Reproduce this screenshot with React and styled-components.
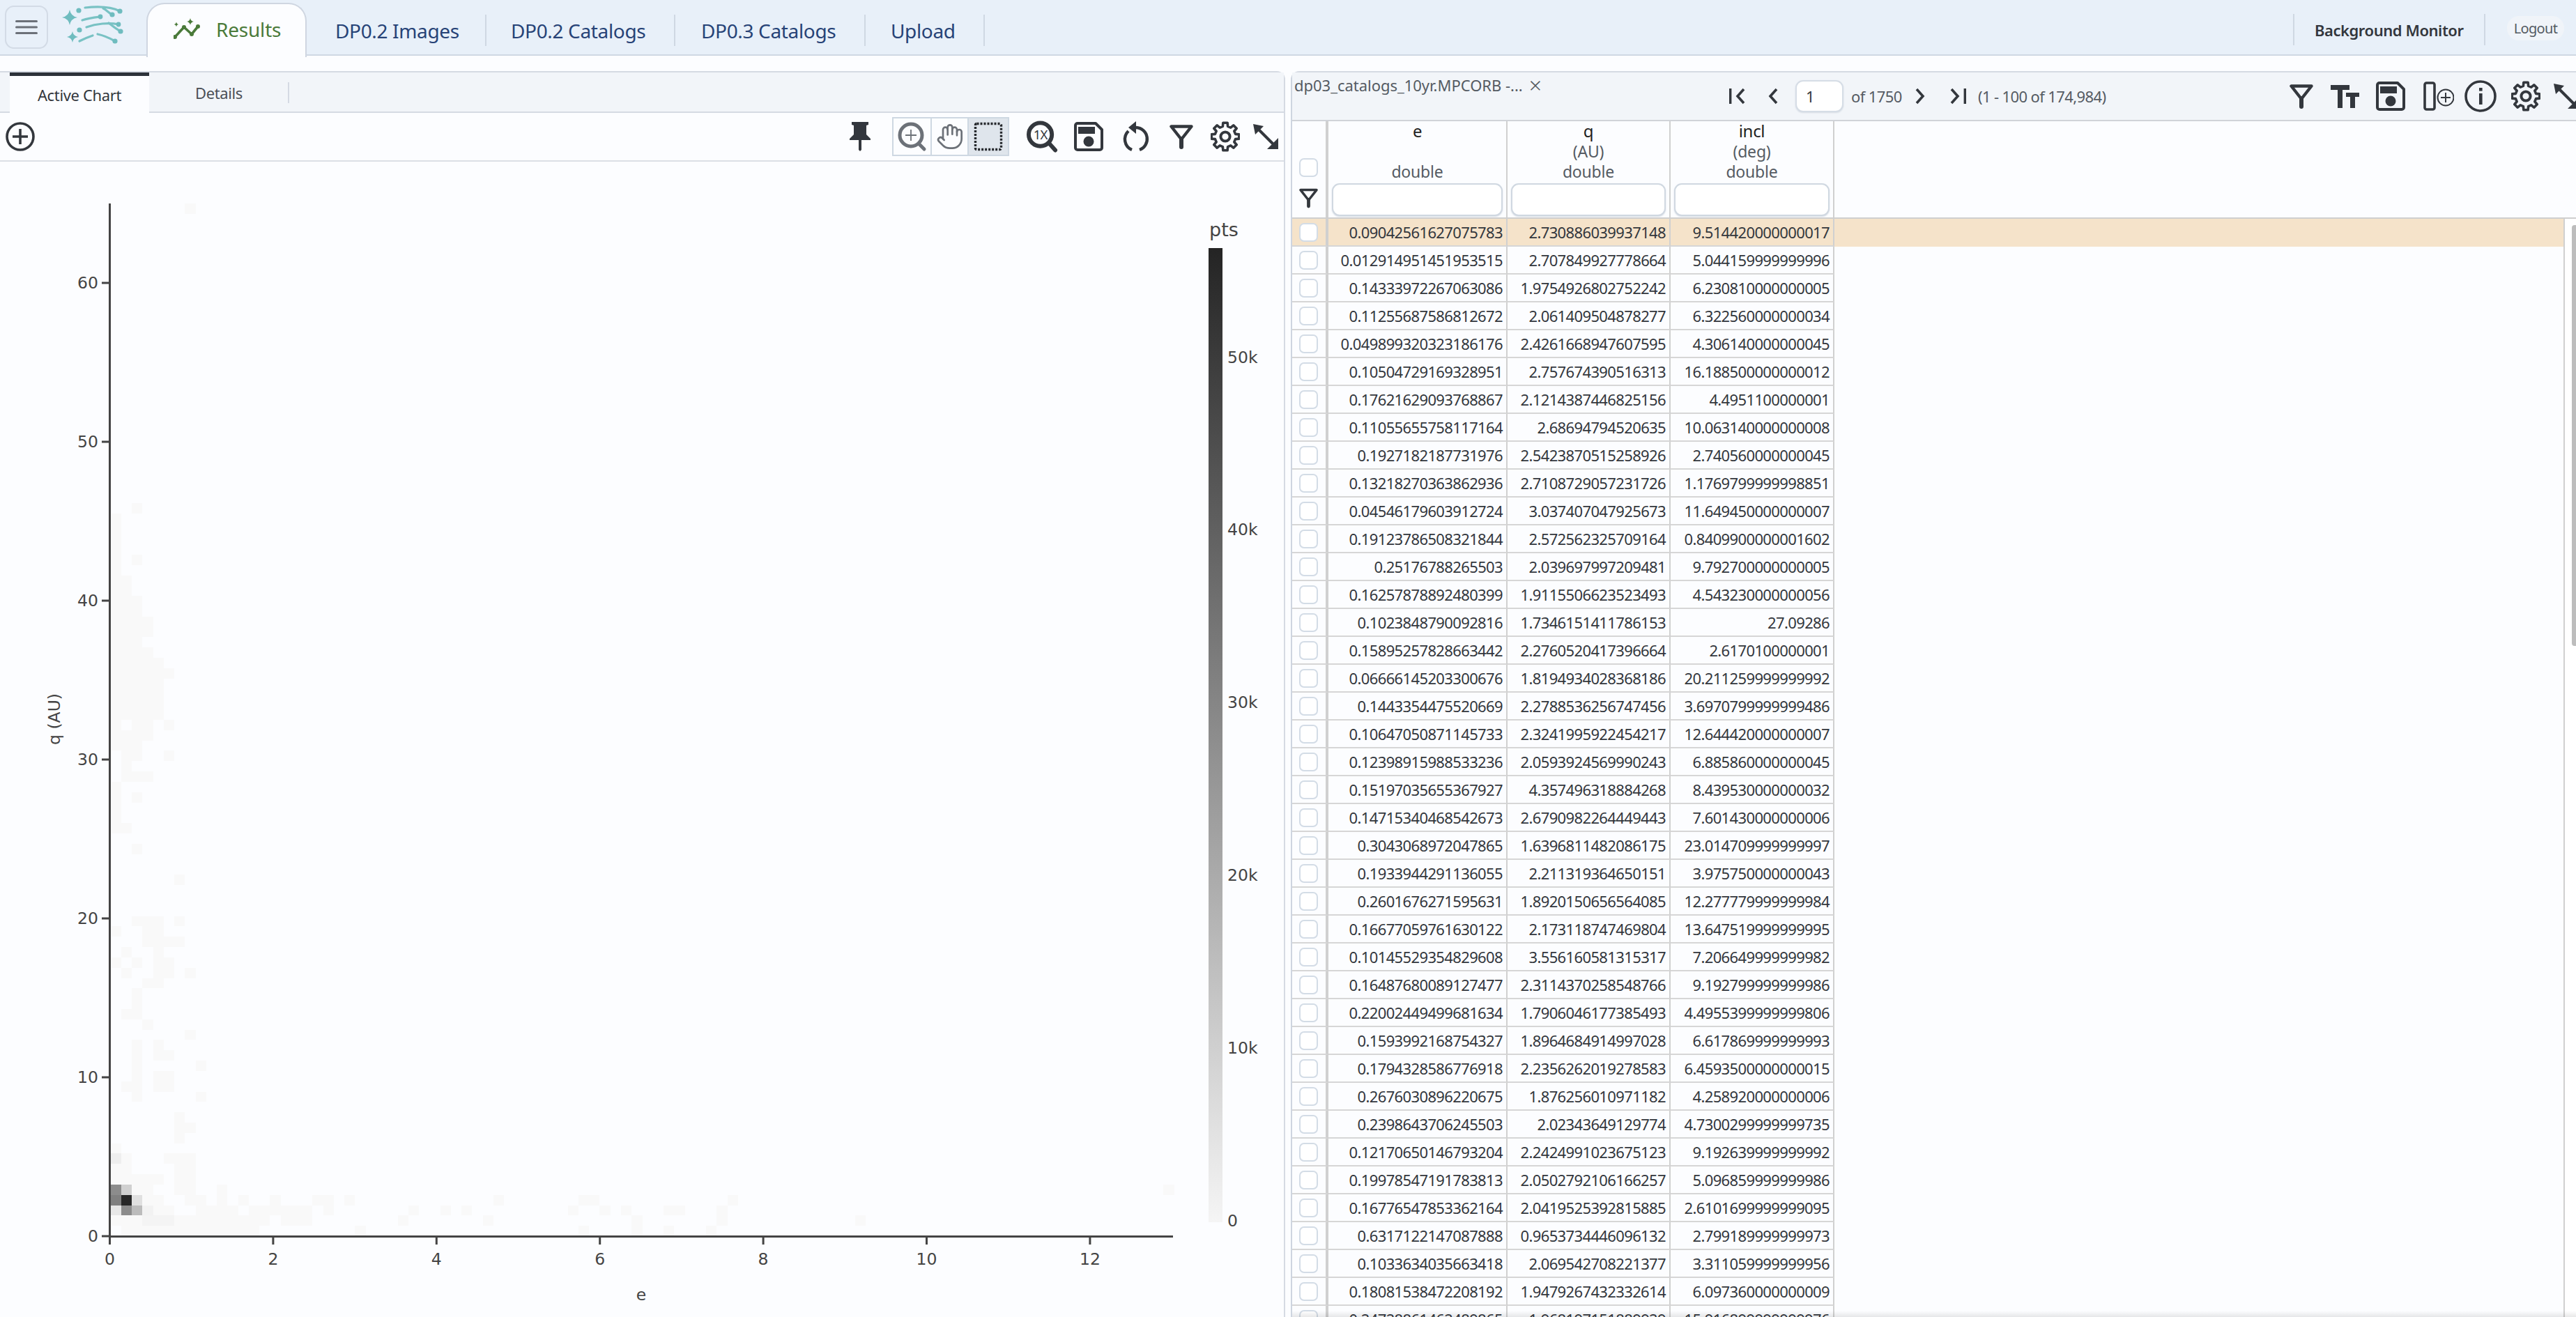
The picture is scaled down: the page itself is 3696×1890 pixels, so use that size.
import React from 'react';
import styled, { createGlobalStyle } from 'styled-components';
import { Hand } from 'lucide-react';

const Global = createGlobalStyle`
  html, body { margin: 0; padding: 0; background: #fcfdff; }
  body { font-family: "Noto Sans", "Open Sans", sans-serif; }
  #root { width: 3696px; height: 1890px; overflow: hidden; }
  * { box-sizing: border-box; }
`;

const INK = '#33373d';
const GREY = '#6c7178';

const Page = styled.div`
  width: 3696px; height: 1890px; display: flex; flex-direction: column;
  background: #fcfdff; overflow: hidden;
`;
const NavBar = styled.header`
  flex: none; height: 80px; display: flex; align-items: flex-start;
  background: #e8f0f9; border-bottom: 2px solid #cfd8e3;
`;
const MenuButton = styled.div`
  width: 62px; height: 62px; margin: 8px 0 0 7px; flex: none; display: flex; align-items: center;
  justify-content: center; border: 2px solid #d3dbe6; border-radius: 13px;
`;
const LogoBox = styled.div`flex: none; margin: 4px 0 0 19px; width: 92px; height: 66px;`;
const ResultsTab = styled.div`
  flex: none; width: 230px; height: 78px; margin: 4px 0 0 30px; padding: 0 0 4px 37px;
  display: flex; align-items: center; gap: 21px; background: #fcfdff;
  border: 2px solid #cfd6e1; border-bottom: none; border-radius: 26px 26px 0 0;
  color: #4a7a3a; font-size: 28px; letter-spacing: -0.2px;
`;
const NavItem = styled.div`
  flex: none; width: ${p => p.$w}px; height: 45px; margin-top: 21px; padding-left: ${p => p.$pl}px;
  display: flex; align-items: center; border-right: 2px solid #cfd8e3; white-space: nowrap;
  color: #274377; font-size: 28px; letter-spacing: -0.35px;
`;
const MonitorItem = styled.div`
  flex: none; margin-left: auto; width: 276px; height: 45px; margin-top: 20px; padding-left: 29px;
  display: flex; align-items: center; white-space: nowrap;
  border-left: 2px solid #cfd8e3; border-right: 2px solid #cfd8e3;
  color: ${INK}; font-size: 22px; font-weight: 600; letter-spacing: -0.45px;
`;
const LogoutPill = styled.div`
  flex: none; width: 82px; height: 35px; margin: 23px 17px 0 31px; display: flex; align-items: center;
  justify-content: center; border-radius: 17px; background: #f0f4f9; color: #555b63;
  font-size: 20px; letter-spacing: -0.7px;
`;
const Main = styled.main`flex: 1; min-height: 0; display: flex; gap: 8px; padding-top: 22px;`;
const LeftPanel = styled.section`
  flex: none; width: 1844px; display: flex; flex-direction: column;
  border: 2px solid #d5dae3; border-left: none; border-bottom: none; border-radius: 0 12px 0 0;
`;
const ChartTabs = styled.div`
  flex: none; height: 58px; display: flex; background: #f2f5f9; border-bottom: 2px solid #d5dae3;
`;
const ActiveTab = styled.div`
  flex: none; width: 200px; height: 58px; margin-left: 14px; padding-top: 1px; display: flex; align-items: center;
  justify-content: center; background: #fcfdff; border-top: 5px solid #2c323a;
  color: ${INK}; font-size: 22px; letter-spacing: -0.35px;
`;
const PlainTab = styled.div`
  flex: none; width: 201px; height: 30px; margin-top: 14px; padding-left: 66px; display: flex; align-items: center;
  border-right: 2px solid #d5dae3; color: #4a4f56; font-size: 22px; letter-spacing: -0.4px;
`;
const ChartTools = styled.div`
  flex: none; height: 70px; display: flex; align-items: center; padding: 0 8px;
  border-bottom: 2px solid #dcdfe5;
`;
const Spacer = styled.div`flex: 1;`;
const Slot = styled.div`
  flex: none; width: ${p => p.$w}px; margin-left: ${p => p.$ml || 0}px; display: flex;
  align-items: center; justify-content: center;
  svg { display: block; }
`;
const ZoomGroup = styled.div`
  flex: none; width: 168px; height: 56px; margin-left: 31px; display: flex;
  border: 2px solid #ced8e2; background: #fcfdff;
`;
const ZoomCell = styled.div`
  flex: none; width: ${p => p.$w}px; display: flex; align-items: center; justify-content: center;
  border-left: ${p => p.$divided ? '2px solid #ced8e2' : 'none'};
  background: ${p => p.$active ? '#dfe5ec' : 'transparent'};
`;
const ChartArea = styled.div`flex: 1; min-height: 0; svg { display: block; }`;

const RightPanel = styled.section`
  flex: 1; min-width: 0; display: flex; flex-direction: column;
  border-top: 2px solid #d5dae3; border-left: 2px solid #ced5e0; border-radius: 12px 0 0 0;
`;
const TableBar = styled.div`
  flex: none; height: 70px; display: flex; align-items: center; background: #f2f5f9;
  border-bottom: 2px solid #d0d3d8; padding-left: 3px;
`;
const TableTitle = styled.div`
  flex: none; width: 356px; height: 36px; margin-top: -32px; display: flex; align-items: center; gap: 9px;
  white-space: nowrap; color: #555b63; font-size: 22px; letter-spacing: -0.02px;
`;
const Close = styled.span`font-size: 32px; font-weight: 300; letter-spacing: 0; color: #555b63; line-height: 1;`;
const PageInput = styled.div`
  flex: none; width: 69px; height: 46px; margin-left: 25px; padding-left: 13px; display: flex; align-items: center;
  background: #fff; border: 2px solid #d6dde6; border-radius: 11px; box-shadow: 0 1px 2px #d5dbe3;
  color: ${INK}; font-size: 22px;
`;
const BarText = styled.div`
  flex: none; width: ${p => p.$w}px; margin-left: ${p => p.$ml}px; white-space: nowrap;
  color: #555b63; font-size: 22px; letter-spacing: -0.62px;
`;
const HeaderRow = styled.div`
  flex: none; height: 140px; display: flex; border-bottom: 2px solid #cfcfcf;
`;
const SelectHead = styled.div`
  flex: none; width: 52px; padding: 53px 0 0 10px; display: flex; flex-direction: column; gap: 13px;
  border-right: 4px solid #d0d0d0;
`;
const HeadCell = styled.div`
  flex: none; width: ${p => p.$w}px; display: flex; flex-direction: column; align-items: center;
  border-right: 2px solid #d0d0d0;
`;
const HeadName = styled.div`height: 29px; line-height: 28px; color: #222; font-size: 24px; letter-spacing: -0.3px;`;
const HeadSub = styled.div`height: 29px; line-height: 29px; color: #555b63; font-size: 23px; letter-spacing: -0.2px;`;
const FilterInput = styled.div`
  width: calc(100% - 10px); height: 47px; margin-top: 2px; background: #fff;
  border: 2px solid #d0d8e1; border-radius: 11px; box-shadow: 0 1px 2px #d5dbe3;
`;
const BodyWrap = styled.div`flex: 1; min-height: 0; display: flex; position: relative;`;
const Rows = styled.div`flex: 1; min-width: 0; overflow: hidden; border-right: 2px solid #d0d0d0;`;
const Row = styled.div`
  height: 40px; display: flex; background: ${p => p.$hl ? '#f5e3ca' : 'transparent'};
`;
const CheckCell = styled.div`
  flex: none; width: 52px; padding-left: 10px; display: flex; align-items: center;
  border-right: 4px solid #d0d0d0; border-bottom: 2px solid #d6d6d6;
`;
const Check = styled.div`
  flex: none; width: 27px; height: 27px; background: #fff; border: 2px solid #d3dce6; border-radius: 7px;
`;
const NumCell = styled.div`
  flex: none; width: ${p => p.$w}px; padding-right: 5px; display: flex; align-items: center; justify-content: flex-end;
  white-space: nowrap; border-right: 2px solid #d0d0d0; border-bottom: 2px solid #d6d6d6;
  color: ${INK}; font-size: 22px; letter-spacing: -0.63px;
`;
const ScrollTrack = styled.div`flex: none; width: 16px; background: #fff; padding: 9px 0 0 10px;`;
const ScrollThumb = styled.div`width: 8px; height: 604px; background: #bdbdbd; border-radius: 4px 0 0 4px;`;
const BottomFade = styled.div`
  position: absolute; left: 0; right: 0; bottom: 0; height: 9px;
  background: linear-gradient(rgba(0,0,0,0), rgba(0,0,0,0.09));
`;

/* ---------- icons ---------- */
const gearPath = (cx, cy, ro, ri, teeth) => {
  const pts = [];
  const step = (Math.PI * 2) / teeth;
  for (let i = 0; i < teeth; i++) {
    const a = i * step - Math.PI / 2;
    const t = step * 0.2;
    const b = step * 0.31;
    [[ri, a - b], [ro, a - t], [ro, a + t], [ri, a + b]].forEach(([r, an]) => {
      pts.push(`${(cx + r * Math.cos(an)).toFixed(2)} ${(cy + r * Math.sin(an)).toFixed(2)}`);
    });
  }
  return `M${pts.join('L')}Z`;
};
const Gear = () => (
  <svg width="42" height="44" viewBox="0 0 42 44">
    <path d={gearPath(21, 22, 20, 15, 8)} fill="none" stroke={INK} strokeWidth="3.6" strokeLinejoin="round" />
    <circle cx="21" cy="22" r="6.6" fill="none" stroke={INK} strokeWidth="4" />
  </svg>
);
const Expand = () => (
  <svg width="36" height="36" viewBox="0 0 36 36">
    <line x1="6" y1="6" x2="30" y2="30" stroke={INK} strokeWidth="4" />
    <path d="M0 0L15 3L3 15Z M36 36V20L20 36Z" fill={INK} />
  </svg>
);
const Funnel = () => (
  <svg width="34" height="35" viewBox="0 0 34 35">
    <path d="M2.5 2.5H31.5L17 21Z" fill="none" stroke={INK} strokeWidth="4.4" strokeLinejoin="round" />
    <line x1="17" y1="20" x2="17" y2="32" stroke={INK} strokeWidth="6" strokeLinecap="round" />
  </svg>
);
const Disk = () => (
  <svg width="42" height="42" viewBox="0 0 42 42">
    <path d="M5 2H31L40 11V37a3 3 0 0 1-3 3H5a3 3 0 0 1-3-3V5a3 3 0 0 1 3-3Z" fill="none" stroke={INK} strokeWidth="4" strokeLinejoin="round" />
    <rect x="6" y="7" width="24" height="10" fill={INK} />
    <circle cx="21" cy="28" r="7.5" fill={INK} />
  </svg>
);
const Pin = () => (
  <svg width="30" height="42" viewBox="0 0 30 42">
    <path d="M3 0H27V4L24 5V18L30 24V26H17V40L15 42L13 40V26H0V24L6 18V5L3 4Z" fill={INK} />
  </svg>
);
const PlusCircle = () => (
  <svg width="42" height="42" viewBox="0 0 42 42">
    <circle cx="21" cy="21" r="19" fill="none" stroke={INK} strokeWidth="3.6" />
    <path d="M21 10V32M10 21H32" stroke={INK} strokeWidth="3.6" />
  </svg>
);
const ZoomIn = () => (
  <svg width="44" height="44" viewBox="0 0 44 44">
    <circle cx="20" cy="20" r="16" fill="none" stroke={GREY} strokeWidth="5" />
    <path d="M20 12V28M12 20H28" stroke={GREY} strokeWidth="1.8" />
    <line x1="31" y1="32" x2="39" y2="40" stroke={GREY} strokeWidth="5" strokeLinecap="round" />
  </svg>
);
const Marquee = () => (
  <svg width="42" height="42" viewBox="0 0 42 42">
    <rect x="2.5" y="2.5" width="37" height="37" rx="2" fill="none" stroke="#26292d" strokeWidth="3.4" strokeDasharray="3 2" />
  </svg>
);
const ZoomOne = () => (
  <svg width="46" height="46" viewBox="0 0 46 46">
    <circle cx="20" cy="20" r="17" fill="none" stroke={INK} strokeWidth="6" />
    <text x="20" y="27" textAnchor="middle" fontFamily="Noto Sans, sans-serif" fontSize="19" letterSpacing="-1" fill={INK}>1X</text>
    <line x1="33" y1="33" x2="42" y2="43" stroke={INK} strokeWidth="6" strokeLinecap="round" />
  </svg>
);
const Rotate = () => (
  <svg width="40" height="44" viewBox="0 0 40 44">
    <path d="M20 9A16.5 16.5 0 0 1 25 41" fill="none" stroke={INK} strokeWidth="4.4" />
    <path d="M9 14A16.5 16.5 0 0 0 14 41" fill="none" stroke={INK} strokeWidth="4.4" />
    <path d="M20 0V18L9 9Z" fill={INK} />
  </svg>
);
const TextSize = () => (
  <svg width="41" height="33" viewBox="0 0 41 33">
    <path d="M0 0H27V7H17V33H10V7H0Z M22 11H41V17H35V33H28V17H22Z" fill={INK} />
  </svg>
);
const AddColumn = () => (
  <svg width="44" height="42" viewBox="0 0 44 42">
    <rect x="2" y="2" width="14" height="38" rx="2.5" fill="none" stroke={INK} strokeWidth="3.6" />
    <circle cx="32" cy="23" r="11.5" fill="none" stroke={INK} strokeWidth="2" />
    <path d="M32 16V30M25 23H39" stroke={INK} strokeWidth="2" />
  </svg>
);
const Info = () => (
  <svg width="46" height="46" viewBox="0 0 46 46">
    <circle cx="23" cy="23" r="21" fill="none" stroke={INK} strokeWidth="3.6" />
    <rect x="21" y="11" width="4.6" height="4.6" fill={INK} />
    <rect x="21" y="19" width="4.6" height="16" fill={INK} />
  </svg>
);
const Chevron = ({ flip, bar }) => (
  <svg width={bar ? 24 : 14} height="24" viewBox={bar ? '0 0 24 24' : '0 0 14 24'} style={flip ? { transform: 'scaleX(-1)' } : undefined}>
    {bar && <rect x="1" y="1" width="3.4" height="22" fill={INK} />}
    <path d={bar ? 'M22 2L13 12L22 22' : 'M12 2L3 12L12 22'} fill="none" stroke={INK} strokeWidth="3.6" />
  </svg>
);
const Star = ({ x, y, r, fill }) => (
  <path d={`M${x} ${y - r}Q${x + r * 0.15} ${y - r * 0.15} ${x + r} ${y}Q${x + r * 0.15} ${y + r * 0.15} ${x} ${y + r}Q${x - r * 0.15} ${y + r * 0.15} ${x - r} ${y}Q${x - r * 0.15} ${y - r * 0.15} ${x} ${y - r}Z`} fill={fill} />
);
const Logo = () => (
  <svg width="92" height="66" viewBox="88 4 92 66">
    <g fill="none" stroke="#79c2c4" strokeWidth="3.2" strokeLinecap="round">
      <path d="M122 11C140 9 160 10 172 16" />
      <path d="M148 12C153 14 156 19 161 21" />
      <path d="M118 29C127 26 136 25 144 24" />
      <path d="M124 39C138 34 156 32 170 35" />
      <path d="M156 33C161 37 167 42 173 45" />
      <path d="M114 59C120 56 127 53 133 51" />
      <path d="M140 49C149 51 158 55 165 59" />
    </g>
    <g fill="#6fbcbf">
      <Star x={100} y={25} r={11} fill="#6fbcbf" />
      <Star x={104} y={53} r={8} fill="#6fbcbf" />
      <circle cx="113" cy="15" r="3.6" />
      <circle cx="172" cy="16" r="3.6" />
      <circle cx="161" cy="21" r="3.6" />
      <circle cx="144" cy="24" r="3.4" />
      <circle cx="114" cy="43" r="3.6" />
      <circle cx="170" cy="35" r="3.4" />
      <circle cx="173" cy="45" r="3.6" />
      <circle cx="165" cy="59" r="3.6" />
    </g>
  </svg>
);
const ResultsIcon = () => (
  <svg width="40" height="34" viewBox="248 26 40 34">
    <path d="M250 54L263 40L274 50L283 39" fill="none" stroke="#4a7a3a" strokeWidth="3.6" strokeLinejoin="round" />
    <circle cx="250" cy="54" r="3" fill="#4a7a3a" /><circle cx="263" cy="40" r="3" fill="#4a7a3a" />
    <circle cx="274" cy="50" r="3" fill="#4a7a3a" /><circle cx="283" cy="39" r="3" fill="#4a7a3a" />
    <Star x={272} y={32} r={5} fill="#4a7a3a" />
    <Star x={252} y={36} r={3.2} fill="#4a7a3a" />
  </svg>
);
const Hamburger = () => (
  <svg width="32" height="22" viewBox="0 0 32 22">
    <path d="M1.5 2.5H30.5M1.5 11H30.5M1.5 19.5H30.5" stroke="#6b7078" strokeWidth="3" strokeLinecap="round" />
  </svg>
);

/* ---------- heat map ---------- */
const CW = 15.26, CH = 14.82, OX = 158.5, OY = 1774;
const FAINT = [];
const span = (c, from, to) => { for (let r = from; r <= to; r++) FAINT.push([c, r]); };
[[2,70,70],[0,47,69],[0,39,43],[1,50,63],[1,44,48],[1,39,39],[2,65,65],[2,49,61],[2,46,48],[2,44,44],[2,42,42],[2,37,37],
 [3,58,59],[3,48,56],[3,44,44],[4,50,55],[5,54,54],[5,49,49],[5,46,46],[6,34,34],[6,30,30],[2,30,30],[3,30,30],[4,30,30],
 [0,29,29],[3,28,29],[4,28,29],[5,28,28],[6,28,28],[1,27,27],[4,25,27],[0,26,26],[2,26,26],[1,25,25],[5,25,26],[7,25,25],
 [6,9,11],[7,10,10],[0,8,8],[1,7,7],[5,7,7],[6,4,7],[7,4,7],[0,5,6],[1,5,6],[2,5,5],[3,5,5],[4,5,5],[2,4,4],[3,4,4],[10,3,4],
 [3,3,3],[4,3,3],[7,3,3],[8,3,3],[12,3,3],[15,3,3],[19,3,3],[20,3,3],[22,3,3],[4,2,2],[5,2,2],[8,2,2],[9,2,2],[10,2,2],[11,2,2],
 [13,2,2],[14,2,2],[15,2,2],[16,2,2],[17,2,2],[18,2,2],[20,2,2],[0,1,1],[1,1,1],[2,1,1],[3,1,1],[4,1,1],[5,1,1],[6,1,1],[7,1,1],
 [8,1,1],[9,1,1],[10,1,1],[11,1,1],[12,1,1],[13,1,1],[14,1,1],[16,1,1],[17,1,1],[18,1,1],[7,99,99],[99,4,4]
].forEach(([c, a, b]) => span(c, a, b));
for (let c = 1; c <= 13; c++) FAINT.push([c, 0]);
let seed = 7;
const rnd = () => { seed = (seed * 16807) % 2147483647; return seed / 2147483647; };
for (let c = 23; c < 72; c++) for (let r = 0; r < 4; r++) if (rnd() < 0.24 - c * 0.002) FAINT.push([c, r]);
for (let c = 1; c < 9; c++) for (let r = 12; r < 25; r++) if (rnd() < 0.22) FAINT.push([c, r]);
const DARK = [
  [0,7,'#eeeeee'],[0,4,'#8c8c8c'],[1,4,'#d0d0d0'],[0,3,'#808080'],[1,3,'#272727'],[2,3,'#e0e0e0'],
  [0,2,'#e8e8e8'],[1,2,'#8c8c8c'],[2,2,'#bcbcbc'],[3,2,'#f2f2f2'],[3,1,'#f4f4f4'],[4,1,'#f4f4f4'],[5,1,'#f4f4f4'],
];
const Cell = ({ c, r, fill }) => (
  <rect x={OX + c * CW} y={OY - (r + 1) * CH} width={CW} height={CH} fill={fill} shapeRendering="crispEdges" />
);
const tickFont = { fontFamily: 'DejaVu Sans, sans-serif', fill: '#444' };
const Chart = () => (
  <svg width="1842" height="1658" viewBox="0 232 1842 1658">
    <defs>
      <linearGradient id="ramp" x1="0" y1="0" x2="0" y2="1">
        <stop offset="0" stopColor="#242424" />
        <stop offset="1" stopColor="#f5f5f5" />
      </linearGradient>
    </defs>
    {FAINT.map(([c, r], i) => <Cell key={i} c={c} r={r} fill="#f9f9f9" />)}
    {DARK.map(([c, r, f]) => <Cell key={`${c}-${r}`} c={c} r={r} fill={f} />)}
    <g stroke="#444" strokeWidth="3">
      <line x1="157.5" y1="292" x2="157.5" y2="1775" />
      <line x1="156" y1="1774.5" x2="1683" y2="1774.5" />
      {[0, 2, 4, 6, 8, 10, 12].map(v => <line key={v} x1={157.5 + v * 117.2} y1="1775" x2={157.5 + v * 117.2} y2="1786" />)}
      {[0, 10, 20, 30, 40, 50, 60].map(v => <line key={v} x1="146" y1={1774 - v * 22.8} x2="157" y2={1774 - v * 22.8} />)}
    </g>
    <g {...tickFont} fontSize="23.5" textAnchor="middle">
      {[0, 2, 4, 6, 8, 10, 12].map(v => <text key={v} x={157.5 + v * 117.2} y="1815">{v}</text>)}
      <text x="920" y="1866">e</text>
      <text transform="translate(86 1032) rotate(-90)">q (AU)</text>
    </g>
    <g {...tickFont} fontSize="23.5" textAnchor="end">
      {[0, 10, 20, 30, 40, 50, 60].map(v => <text key={v} x="141" y={1782 - v * 22.8}>{v}</text>)}
    </g>
    <rect x="1734" y="356" width="20" height="1398" fill="url(#ramp)" />
    <text {...tickFont} x="1735" y="339" fontSize="27">pts</text>
    <g {...tickFont} fontSize="23.5">
      {[['50k', 513], ['40k', 760], ['30k', 1008], ['20k', 1256], ['10k', 1504], ['0', 1752]].map(([t, y]) => (
        <text key={t} x="1761" y={y + 8}>{t}</text>
      ))}
    </g>
  </svg>
);

const DATA = `0.09042561627075783 2.730886039937148 9.514420000000017
0.012914951451953515 2.707849927778664 5.044159999999996
0.14333972267063086 1.9754926802752242 6.230810000000005
0.11255687586812672 2.061409504878277 6.322560000000034
0.049899320323186176 2.4261668947607595 4.306140000000045
0.10504729169328951 2.757674390516313 16.188500000000012
0.17621629093768867 2.1214387446825156 4.4951100000001
0.11055655758117164 2.68694794520635 10.063140000000008
0.1927182187731976 2.5423870515258926 2.740560000000045
0.13218270363862936 2.7108729057231726 1.1769799999998851
0.04546179603912724 3.037407047925673 11.649450000000007
0.19123786508321844 2.572562325709164 0.8409900000001602
0.25176788265503 2.039697997209481 9.792700000000005
0.16257878892480399 1.9115506623523493 4.543230000000056
0.1023848790092816 1.7346151411786153 27.09286
0.15895257828663442 2.2760520417396664 2.6170100000001
0.06666145203300676 1.8194934028368186 20.211259999999992
0.1443354475520669 2.2788536256747456 3.6970799999999486
0.10647050871145733 2.3241995922454217 12.644420000000007
0.12398915988533236 2.0593924569990243 6.885860000000045
0.15197035655367927 4.357496318884268 8.439530000000032
0.14715340468542673 2.6790982264449443 7.601430000000006
0.3043068972047865 1.6396811482086175 23.014709999999997
0.1933944291136055 2.211319364650151 3.975750000000043
0.2601676271595631 1.8920150656564085 12.277779999999984
0.16677059761630122 2.173118747469804 13.647519999999995
0.10145529354829608 3.556160581315317 7.206649999999982
0.16487680089127477 2.3114370258548766 9.192799999999986
0.22002449499681634 1.7906046177385493 4.4955399999999806
0.1593992168754327 1.8964684914997028 6.617869999999993
0.1794328586776918 2.2356262019278583 6.4593500000000015
0.2676030896220675 1.876256010971182 4.258920000000006
0.2398643706245503 2.02343649129774 4.7300299999999735
0.12170650146793204 2.2424991023675123 9.192639999999992
0.19978547191783813 2.0502792106166257 5.096859999999986
0.16776547853362164 2.0419525392815885 2.6101699999999095
0.6317122147087888 0.9653734446096132 2.799189999999973
0.1033634035663418 2.069542708221377 3.311059999999956
0.18081538472208192 1.9479267432332614 6.097360000000009
0.24728861462489865 1.968197151889929 15.916899999999976`.split('\n').map(l => l.split(' '));

const COLS = [
  { name: 'e', unit: '', w: 257 },
  { name: 'q', unit: '(AU)', w: 234 },
  { name: 'incl', unit: '(deg)', w: 235 },
];
const NAV = [
  { t: 'DP0.2 Images', w: 258, pl: 41 },
  { t: 'DP0.2 Catalogs', w: 271, pl: 35 },
  { t: 'DP0.3 Catalogs', w: 273, pl: 37 },
  { t: 'Upload', w: 171, pl: 36 },
];

export default function App() {
  return (
    <Page>
      <Global />
      <NavBar>
        <MenuButton><Hamburger /></MenuButton>
        <LogoBox><Logo /></LogoBox>
        <ResultsTab><ResultsIcon />Results</ResultsTab>
        {NAV.map(n => <NavItem key={n.t} $w={n.w} $pl={n.pl}>{n.t}</NavItem>)}
        <MonitorItem>Background Monitor</MonitorItem>
        <LogoutPill>Logout</LogoutPill>
      </NavBar>
      <Main>
        <LeftPanel>
          <ChartTabs>
            <ActiveTab>Active Chart</ActiveTab>
            <PlainTab>Details</PlainTab>
          </ChartTabs>
          <ChartTools>
            <Slot $w={42}><PlusCircle /></Slot>
            <Spacer />
            <Slot $w={30}><Pin /></Slot>
            <ZoomGroup>
              <ZoomCell $w={53}><ZoomIn /></ZoomCell>
              <ZoomCell $w={53} $divided><Hand size={40} color={GREY} strokeWidth={1.6} /></ZoomCell>
              <ZoomCell $w={58} $divided $active><Marquee /></ZoomCell>
            </ZoomGroup>
            <Slot $w={45} $ml={25}><ZoomOne /></Slot>
            <Slot $w={42} $ml={23}><Disk /></Slot>
            <Slot $w={40} $ml={27}><Rotate /></Slot>
            <Slot $w={34} $ml={28}><Funnel /></Slot>
            <Slot $w={42} $ml={25}><Gear /></Slot>
            <Slot $w={36} $ml={19}><Expand /></Slot>
          </ChartTools>
          <ChartArea><Chart /></ChartArea>
        </LeftPanel>
        <RightPanel>
          <TableBar>
            <TableTitle>dp03_catalogs_10yr.MPCORB -...<Close>×</Close></TableTitle>
            <Slot $w={24} $ml={267}><Chevron bar /></Slot>
            <Slot $w={14} $ml={33}><Chevron /></Slot>
            <PageInput>1</PageInput>
            <BarText $w={73} $ml={11}>of 1750</BarText>
            <Slot $w={14} $ml={19}><Chevron flip /></Slot>
            <Slot $w={24} $ml={36}><Chevron flip bar /></Slot>
            <BarText $w={187} $ml={16}>(1 - 100 of 174,984)</BarText>
            <Slot $w={34} $ml={260}><Funnel /></Slot>
            <Slot $w={41} $ml={25}><TextSize /></Slot>
            <Slot $w={42} $ml={24}><Disk /></Slot>
            <Slot $w={44} $ml={26}><AddColumn /></Slot>
            <Slot $w={46} $ml={15}><Info /></Slot>
            <Slot $w={42} $ml={21}><Gear /></Slot>
            <Slot $w={36} $ml={19}><Expand /></Slot>
          </TableBar>
          <HeaderRow>
            <SelectHead>
              <Check />
              <Slot $w={27}><Funnel /></Slot>
            </SelectHead>
            {COLS.map(c => (
              <HeadCell key={c.name} $w={c.w}>
                <HeadName>{c.name}</HeadName>
                <HeadSub>{c.unit}</HeadSub>
                <HeadSub>double</HeadSub>
                <FilterInput />
              </HeadCell>
            ))}
          </HeaderRow>
          <BodyWrap>
            <Rows>
              {DATA.map((row, i) => (
                <Row key={i} $hl={i === 0}>
                  <CheckCell><Check /></CheckCell>
                  {row.map((v, j) => <NumCell key={j} $w={COLS[j].w}>{v}</NumCell>)}
                </Row>
              ))}
            </Rows>
            <ScrollTrack><ScrollThumb /></ScrollTrack>
            <BottomFade />
          </BodyWrap>
        </RightPanel>
      </Main>
    </Page>
  );
}
